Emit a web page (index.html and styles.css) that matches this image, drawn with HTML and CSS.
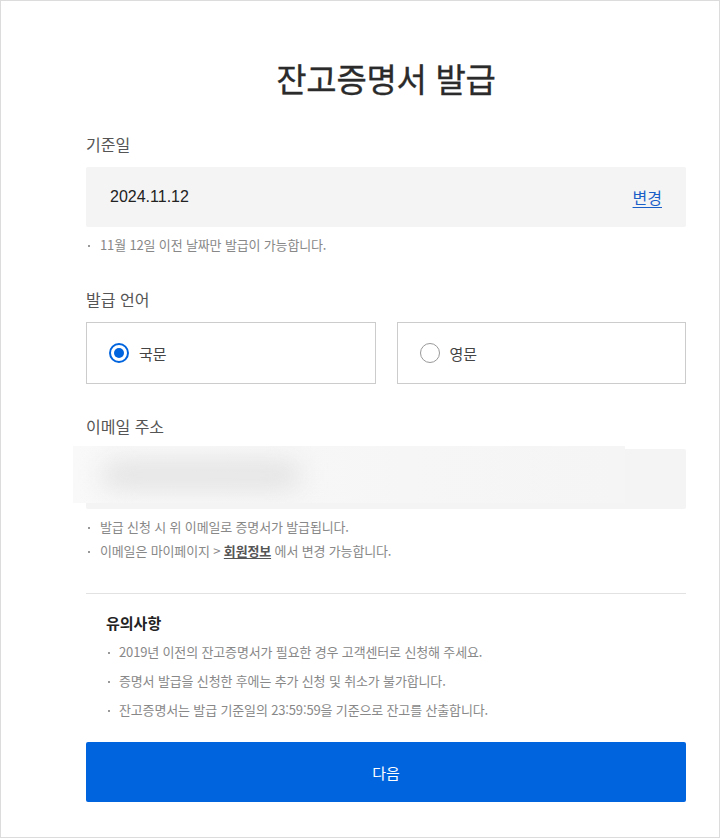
FILE: index.html
```html
<!DOCTYPE html>
<html lang="ko">
<head>
<meta charset="utf-8">
<title>잔고증명서 발급</title>
<link rel="stylesheet" href="styles.css">
</head>
<body>
<main class="page">
  <h1 class="title">잔고증명서 발급</h1>

  <section class="field">
    <h2 class="label">기준일</h2>
    <div class="date-box">
      <span class="date">2024.11.12</span>
      <a class="change" href="#">변경</a>
    </div>
    <ul class="notes">
      <li>11월 12일 이전 날짜만 발급이 가능합니다.</li>
    </ul>
  </section>

  <section class="field">
    <h2 class="label">발급 언어</h2>
    <div class="radios">
      <label class="radio-box">
        <span class="radio checked"></span>
        <span class="radio-text">국문</span>
      </label>
      <label class="radio-box">
        <span class="radio"></span>
        <span class="radio-text">영문</span>
      </label>
    </div>
  </section>

  <section class="field">
    <h2 class="label">이메일 주소</h2>
    <div class="email-box">
      <div class="blur-cover"><span class="blur-smudge"></span></div>
    </div>
    <ul class="notes">
      <li>발급 신청 시 위 이메일로 증명서가 발급됩니다.</li>
      <li>이메일은 마이페이지 &gt; <a class="member" href="#">회원정보</a> 에서 변경 가능합니다.</li>
    </ul>
  </section>

  <section class="caution">
    <h3 class="caution-title">유의사항</h3>
    <ul class="caution-list">
      <li>2019년 이전의 잔고증명서가 필요한 경우 고객센터로 신청해 주세요.</li>
      <li>증명서 발급을 신청한 후에는 추가 신청 및 취소가 불가합니다.</li>
      <li>잔고증명서는 발급 기준일의 23:59:59을 기준으로 잔고를 산출합니다.</li>
    </ul>
  </section>

  <button class="next" type="button">다음</button>
</main>
</body>
</html>
```

FILE: styles.css
```css
* {
  box-sizing: border-box;
}

html, body {
  margin: 0;
  padding: 0;
}

body {
  width: 720px;
  height: 838px;
  border: 1px solid #dcdcdc;
  background: #fff;
  font-family: "Noto Sans CJK KR", "Noto Sans", sans-serif;
  color: #333;
  overflow: hidden;
}

.page {
  width: 600px;
  margin-left: 85px;
  padding-top: 57px;
}

.title {
  margin: 0;
  font-size: 33px;
  line-height: 40px;
  font-weight: 400;
  color: #2b2b2b;
  text-align: center;
  letter-spacing: -0.3px;
  -webkit-text-stroke: 0.3px #2b2b2b;
}

.field {
  margin-top: 30px;
}

.field:first-of-type {
  margin-top: 34px;
}

.label {
  margin: 0;
  font-size: 16px;
  line-height: 24px;
  font-weight: 400;
  color: #555;
}

.date-box {
  margin-top: 11px;
  height: 60px;
  background: #f4f4f4;
  border-radius: 2px;
  padding: 0 24px;
  display: flex;
  align-items: center;
  justify-content: space-between;
}

.date {
  font-family: "Liberation Sans", sans-serif;
  font-size: 16px;
  color: #222;
}

.change {
  font-size: 16px;
  color: #1a5fc8;
  text-decoration: underline;
  text-underline-offset: 3px;
}

.notes {
  list-style: none;
  margin: 6px 0 0;
  padding: 0;
}

.notes li,
.caution-list li {
  position: relative;
  padding-left: 14px;
  font-size: 13px;
  line-height: 24px;
  color: #888;
  letter-spacing: -0.15px;
}

.notes li::before,
.caution-list li::before {
  content: "";
  position: absolute;
  left: 2px;
  top: 50%;
  width: 2px;
  height: 2px;
  background: #999;
}

.member {
  color: #555;
  font-weight: 700;
  text-decoration: underline;
  text-underline-offset: 2px;
}

.radios {
  margin-top: 11px;
  display: grid;
  grid-template-columns: 1fr 1fr;
  gap: 21px;
}

.radio-box {
  height: 62px;
  border: 1px solid #ccc;
  display: flex;
  align-items: center;
  padding-left: 22px;
  gap: 10px;
}

.radio {
  width: 20px;
  height: 20px;
  border-radius: 50%;
  border: 1.5px solid #999;
  display: flex;
  align-items: center;
  justify-content: center;
}

.radio.checked {
  border: 2px solid #0064de;
}

.radio.checked::after {
  content: "";
  width: 10px;
  height: 10px;
  border-radius: 50%;
  background: #0064de;
}

.radio-text {
  font-size: 15px;
  color: #444;
}

.email-box {
  position: relative;
  margin-top: 11px;
  height: 60px;
  background: #f4f4f4;
  border-radius: 2px;
}

.blur-cover {
  position: absolute;
  left: -13px;
  top: -3px;
  width: 552px;
  height: 57px;
  background: linear-gradient(90deg, #f9f9f9 0%, #f6f6f6 60%, #f5f5f5 100%);
  overflow: hidden;
}

.blur-smudge {
  position: absolute;
  left: 28px;
  top: 14px;
  width: 200px;
  height: 30px;
  background: #e4e4e4;
  border-radius: 15px;
  filter: blur(12px);
}

.caution {
  margin-top: 30px;
  border-top: 1px solid #e2e2e2;
  padding: 17px 20px 0;
}

.caution-title {
  margin: 0;
  font-size: 15px;
  line-height: 24px;
  font-weight: 700;
  color: #222;
}

.caution-list {
  list-style: none;
  margin: 2px 0 0;
  padding: 0;
}

.caution-list li {
  line-height: 29px;
  padding-left: 13px;
}

.next {
  display: block;
  width: 600px;
  height: 60px;
  margin-top: 18px;
  border: 0;
  border-radius: 2px;
  background: #0064de;
  color: #fff;
  font-family: "Noto Sans CJK KR", sans-serif;
  font-size: 15px;
  cursor: pointer;
}
```
